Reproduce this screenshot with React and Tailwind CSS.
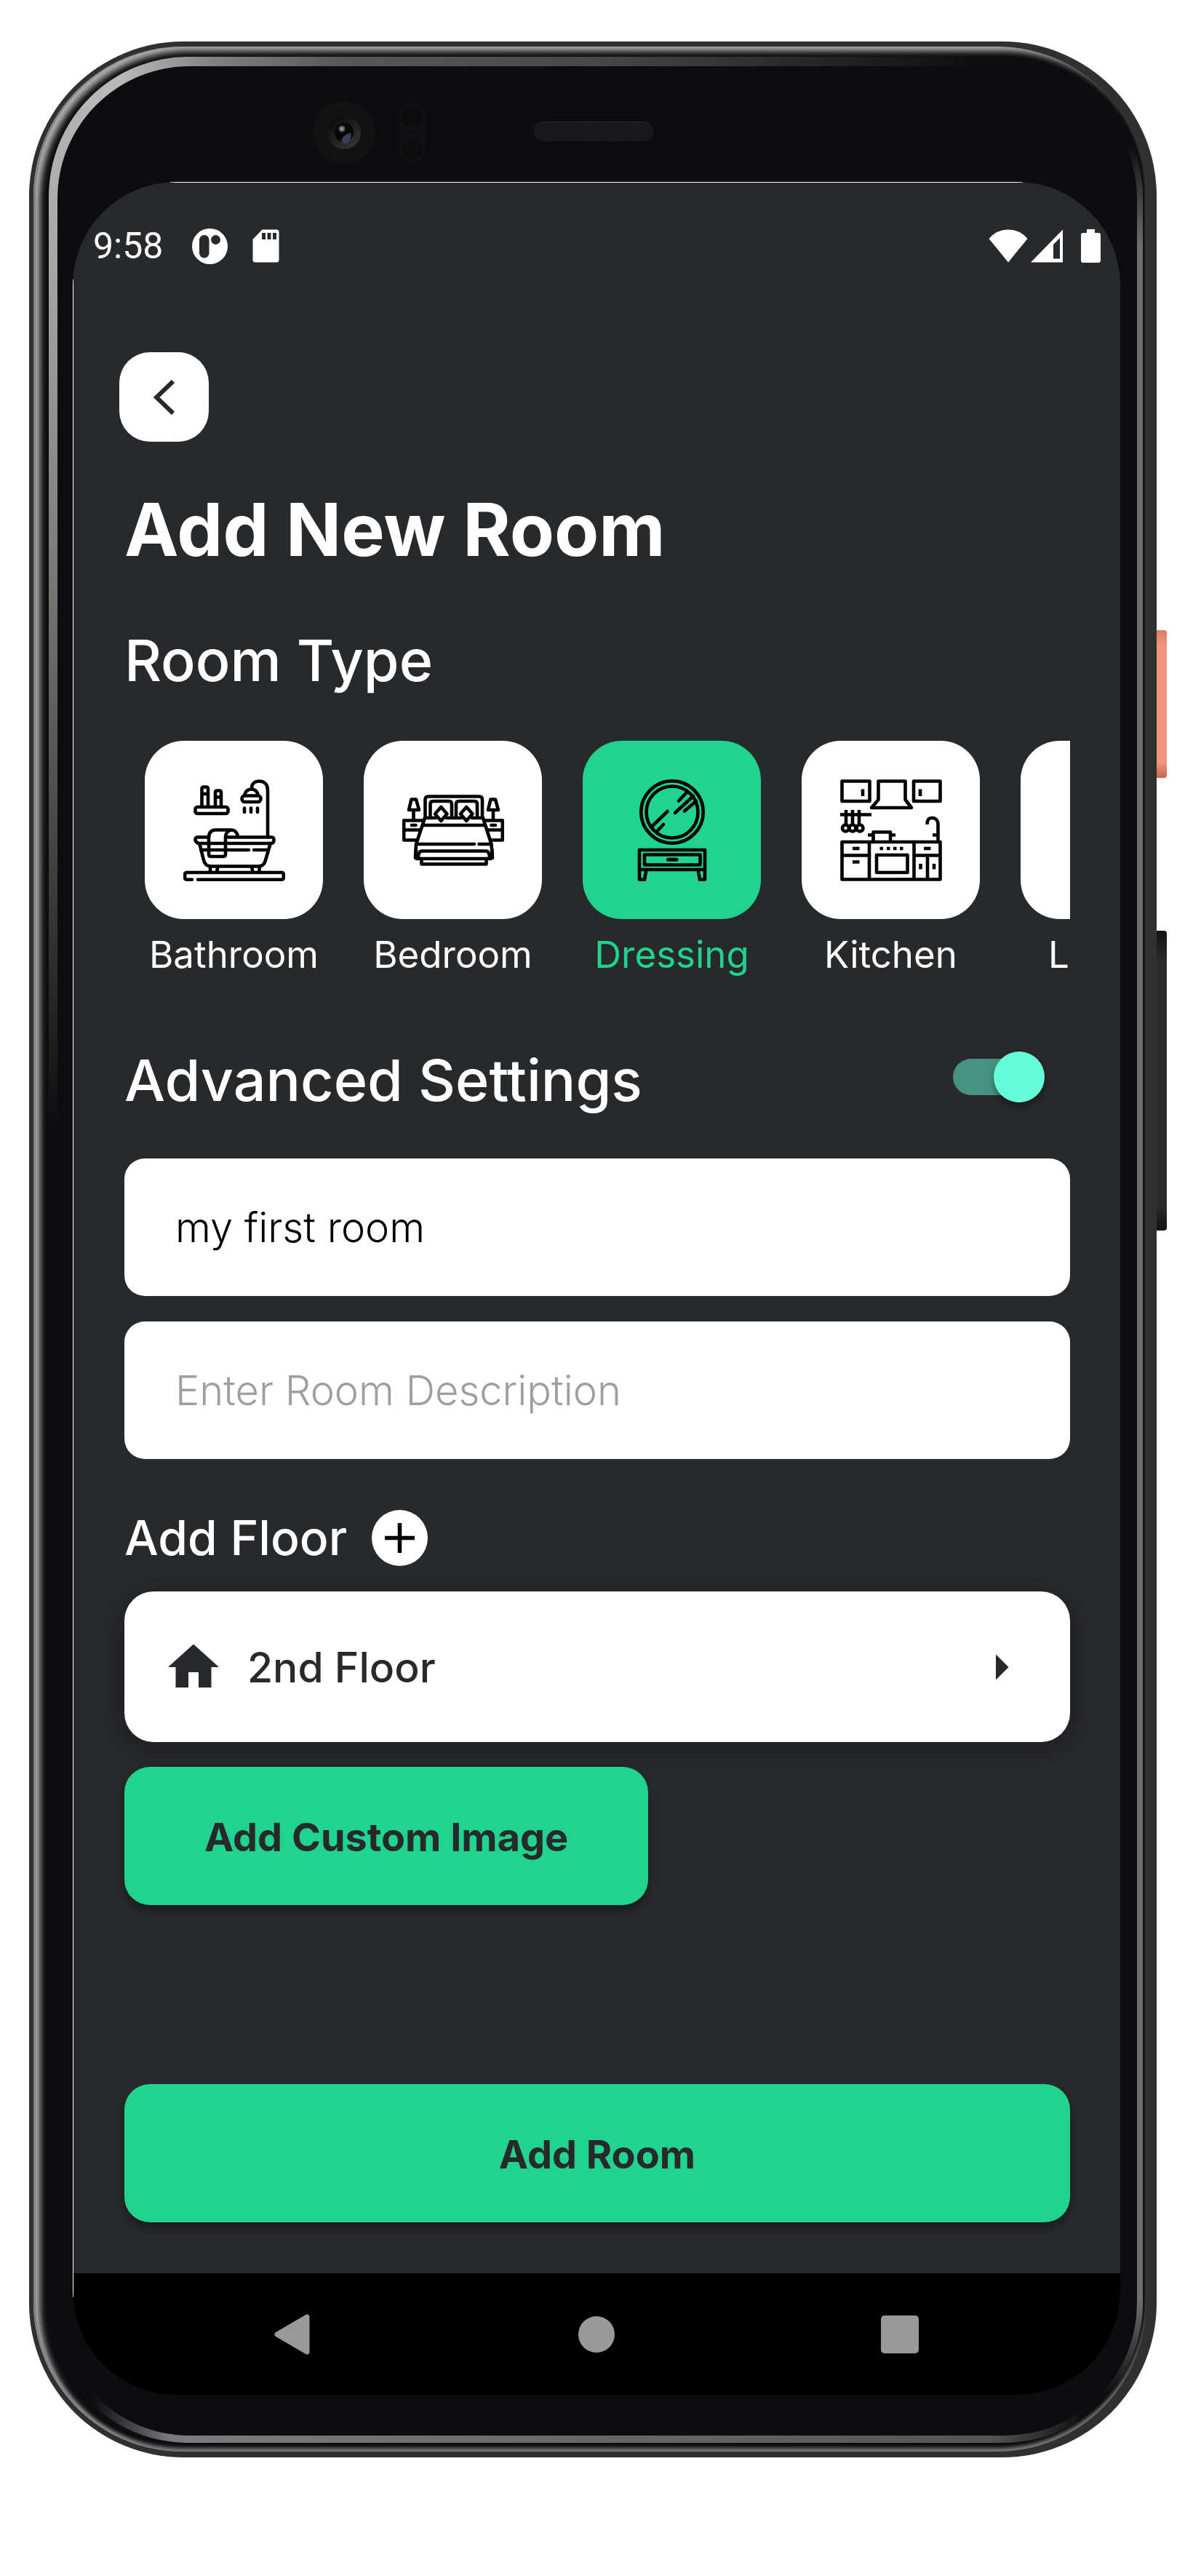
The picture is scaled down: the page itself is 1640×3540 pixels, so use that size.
import { useState } from "react";

/* ---------- status bar glyphs ---------- */

function AppBadgeIcon() {
  return (
    <svg viewBox="0 0 49 49" className="size-[49px]" aria-hidden="true">
      <circle cx="24.5" cy="24.5" r="24.5" fill="#fff" />
      <rect x="10" y="9" width="13.5" height="31.5" rx="6.5" fill="#28292b" />
      <circle cx="32.5" cy="15.5" r="6.5" fill="#28292b" />
    </svg>
  );
}

function SdCardIcon() {
  return (
    <svg viewBox="0 0 37 46" className="h-[46px] w-[37px]" aria-hidden="true">
      <path d="M13.500 0.500H33Q36.500 0.500 36.500 4V42Q36.500 45.500 33 45.500H4Q0.500 45.500 0.500 42V14Z" fill="#fff" />
      <path d="M13 5h5v9h-5zM20.500 5h5v9h-5zM28 5h5v9h-5z" fill="#28292b" />
    </svg>
  );
}

function WifiIcon() {
  return (
    <svg viewBox="0 0 54 46" className="h-[46px] w-[54px]" aria-hidden="true">
      <path d="M27 45.500L0.500 13Q11 0.500 27 0.500T53.500 13Z" fill="#fff" />
    </svg>
  );
}

function SignalIcon() {
  return (
    <svg viewBox="0 0 44 46" className="h-[46px] w-[44px]" aria-hidden="true">
      <path fillRule="evenodd" d="M44 0.500V45.500H0ZM40 12L31 21V40.500H40Z" fill="#fff" />
    </svg>
  );
}

function BatteryIcon() {
  return (
    <svg viewBox="0 0 27 46" className="h-[46px] w-[27px]" aria-hidden="true">
      <path d="M8 0H19V5H24Q27 5 27 8V43Q27 46 24 46H3Q0 46 0 43V8Q0 5 3 5H8Z" fill="#fff" />
    </svg>
  );
}

/* ---------- room glyphs ---------- */

function LineIcon({ children }) {
  return (
    <svg
      viewBox="0 0 140 140"
      className="size-[140px]"
      fill="none"
      stroke="#000"
      strokeWidth="4.600"
      strokeLinecap="round"
      strokeLinejoin="round"
      aria-hidden="true"
    >
      {children}
    </svg>
  );
}

function BathroomIcon() {
  return (
    <LineIcon>
      <rect x="16.500" y="38" width="45" height="9" rx="3" />
      <path d="M25.500 38V13Q25.500 10.500 28 10.500H31.500Q34 10.500 34 13V38M25.500 20H34" />
      <path d="M44 38V18Q44 15.500 46.500 15.500H49.500Q52 15.500 52 18V38M44 24.500H52" />
      <path d="M94 12C94 6 98 2.500 104.500 2.500C112 2.500 116 8 116 15V78" />
      <path d="M84 22Q86 13.500 93.500 13.500T103 22" />
      <rect x="80.500" y="22.500" width="26" height="8.500" rx="4" />
      <path d="M84 39.500V45M93 39.500V45M102 39.500V45" />
      <path d="M35 79.500H20Q16.500 79.500 16.500 83T21 88H120Q124.500 88 124.500 83.500T121 79.500H58" />
      <path d="M35 88V80Q35 69.500 45 69.500H66Q74 70 75 79M58 88V80Q58 71 66 69.500M35 80V103Q35 106 38 106H55Q58 106 58 103V80" />
      <path d="M22.500 89L28 111Q30 119.500 38 119.500H103Q111 119.500 113 111L119.500 89" />
      <path d="M24 97H90M97 97H117" />
      <path d="M37 120V127M47.500 120L46 127M94 120L95.500 127M104.500 120V127" />
      <path d="M12 137.700H5Q2.200 137.700 2.200 135V131Q2.200 128 5 128H135Q137.800 128 137.800 131V135Q137.800 137.700 135 137.700H20" />
    </LineIcon>
  );
}

function BedroomIcon() {
  return (
    <LineIcon>
      <path d="M31.500 53V28Q31.500 23.500 36 23.500H106Q110 23.500 110 28V53" />
      <path d="M38.500 52V34Q38.500 30 42.500 30H64Q68 30 68 34V52M74 52V34Q74 30 78 30H99Q103 30 103 34V52" />
      <path d="M31 53H46M61 53H81M96 53H111" />
      <path d="M53.300 38L61.500 47.500L53.300 57L45 47.500ZM88.200 38L96.500 47.500L88.200 57L80 47.500Z" />
      <path d="M29 63H113M20 89H99M105.500 89H122" />
      <path d="M31 53L19 89L18 108M111 53L122.500 89L124 108" />
      <path d="M27 98.500H115Q118 98.500 119 102L122 109H20L23 102Q24 98.500 27 98.500Z" />
      <path d="M26.500 109V116.500H115.500V109" />
      <path d="M19 97V108H23M123.500 97V108H119" />
      <path d="M12.500 27.500H19L23 42H9ZM15.500 42V55M121.500 27.500H128L132 42H118ZM125 42V55" />
      <path d="M28 56.500H2.200V83.500H20M2.200 69.500H23M13 63H18.500M113 56.500H137.800V83.500H122M118 69.500H137.800M122.500 63H128" />
    </LineIcon>
  );
}

function DressingIcon() {
  return (
    <LineIcon>
      <circle cx="70" cy="45" r="42.700" />
      <circle cx="70" cy="45" r="35.500" />
      <path d="M91 17L79 29.500M99 23L74 46M103 30L87 43.500M63.500 44L41 66M58 62L49 71.500" />
      <rect x="25" y="97" width="90" height="27" />
      <rect x="32" y="103.500" width="76.500" height="14" />
      <path d="M64.500 110.300H76" strokeWidth="5" />
      <path d="M25 124V137.800H32L34.500 124M115 124V137.800H108L105.500 124" />
    </LineIcon>
  );
}

function KitchenIcon() {
  return (
    <LineIcon>
      <g strokeLinecap="butt">
        <rect x="2.500" y="2.500" width="38" height="27.500" />
        <rect x="101" y="2.500" width="36.500" height="27.500" />
        <path d="M31 13.500V23M110 13.500V23" />
        <path d="M52.500 2.500H89.500V28L98 39H43L52.500 28Z" />
        <path d="M0 48.500H43M8 42V62M17 42V62M26 42V62" />
        <circle cx="7.500" cy="67" r="4.500" />
        <circle cx="17" cy="67" r="4.500" />
        <circle cx="27" cy="67" r="4.500" />
        <path d="M45.500 85V72.500H69V85M38 76.500H45M69 76.500H76" />
        <path d="M119.500 62C119.500 55 122 53 126.500 53S134.500 56 134.500 62V85M127 76.500H134" />
        <path d="M2.500 86H137.500V137.500H2.500ZM40 86V137M101.500 86V137M2.500 104.500H40M101.500 104.500H137M120 104.500V137" />
        <path d="M17 95H26.500M17 113.500H26.500M115 95H124.500M110.500 116V123.500M129 116V123.500" />
        <path d="M54.500 95H59M64 95H68.500M73 95H77.500M82 95H86.500" />
        <rect x="50" y="104" width="42.500" height="24" />
      </g>
    </LineIcon>
  );
}

/* ---------- device hardware ---------- */

function SensorBar() {
  return (
    <div className="flex items-center pt-12 pb-[25px] pl-[330px]" aria-hidden="true">
      <svg viewBox="0 0 86 86" className="size-[86px]">
        <defs>
          <linearGradient id="lensRim" x1="0.200" y1="0.100" x2="0.800" y2="0.900">
            <stop offset="0" stopColor="#0c0c0d" />
            <stop offset="1" stopColor="#333335" />
          </linearGradient>
          <radialGradient id="lensGlint">
            <stop offset="0.300" stopColor="#8f8f8f" />
            <stop offset="1" stopColor="#8f8f8f" stopOpacity="0" />
          </radialGradient>
          <clipPath id="lensHole">
            <circle cx="43" cy="43" r="13" />
          </clipPath>
        </defs>
        <circle cx="43" cy="43" r="43" fill="#121212" />
        <circle cx="43" cy="43" r="23" fill="url(#lensRim)" />
        <circle cx="43" cy="43" r="13" fill="#070708" />
        <ellipse cx="49" cy="51" rx="10" ry="6" transform="rotate(-30 49 51)" fill="#3a3f5c" clipPath="url(#lensHole)" />
        <circle cx="40" cy="38" r="5.500" fill="url(#lensGlint)" />
      </svg>
      <div className="ml-8 flex h-[82px] w-[37px] flex-col items-center justify-between rounded-full bg-[#111113] p-1">
        <div className="size-[29px] rounded-full bg-[#0d0d0e]" />
        <div className="size-[29px] rounded-full bg-[#0d0d0e]" />
      </div>
      <div className="mb-1 ml-[149px] h-[27px] w-[164px] rounded-full border-t border-[#2a2a2c] bg-[#17171a] bg-[repeating-conic-gradient(#222225_0_25%,#0f0f11_0_50%)] bg-size-[4px_4px]" />
    </div>
  );
}

function StatusBar() {
  return (
    <div className="flex h-14 items-center pr-[27px] pl-[28px]">
      <time className="font-[Roboto,sans-serif] text-[50px] leading-[56px] text-white">9:58</time>
      <div className="ml-10 flex items-center gap-[34px]">
        <AppBadgeIcon />
        <SdCardIcon />
      </div>
      <div className="ml-auto flex items-center">
        <WifiIcon />
        <span className="ml-1 flex">
          <SignalIcon />
        </span>
        <span className="ml-[25px] flex">
          <BatteryIcon />
        </span>
      </div>
    </div>
  );
}

function NavigationBar() {
  return (
    <nav className="flex h-[167px] items-center justify-between bg-black px-[277px]" aria-label="System">
      <button type="button" aria-label="Back" className="w-[52px]">
        <svg viewBox="0 0 49 56" className="h-14 w-[49px]">
          <path d="M4 28L45 4V52Z" fill="#999" stroke="#999" strokeWidth="7" strokeLinejoin="round" />
        </svg>
      </button>
      <button type="button" aria-label="Home" className="size-[50px] rounded-full bg-[#999]" />
      <button type="button" aria-label="Recent apps" className="size-[52px] rounded-[5px] bg-[#999]" />
    </nav>
  );
}

/* ---------- screen content ---------- */

const ROOMS = [
  { name: "Bathroom", Icon: BathroomIcon },
  { name: "Bedroom", Icon: BedroomIcon },
  { name: "Dressing", Icon: DressingIcon },
  { name: "Kitchen", Icon: KitchenIcon },
  { name: "Library", Icon: null },
];

function RoomTile({ name, Icon, selected, onSelect }) {
  return (
    <button
      type="button"
      aria-pressed={selected}
      onClick={onSelect}
      className="flex w-[245px] shrink-0 flex-col items-center gap-[19px]"
    >
      <span
        className={
          selected
            ? "flex size-[245px] items-center justify-center rounded-[54px] bg-[#20d38f]"
            : "flex size-[245px] items-center justify-center rounded-[54px] bg-white"
        }
      >
        {Icon && <Icon />}
      </span>
      <span
        className={
          selected
            ? "text-[51px] leading-[60px] text-[#20d38f]"
            : "text-[51px] leading-[60px] text-white"
        }
      >
        {name}
      </span>
    </button>
  );
}

const FIELD =
  "block h-[189px] w-full rounded-[28px] bg-white px-[70px] text-[56px] font-light text-black outline-none placeholder:text-[#9e9e9e]";

const PRIMARY =
  "h-[190px] rounded-[35px] bg-[#20d38f] pt-[3px] text-[54px] font-bold text-[#28292b] shadow-[0_7px_12px_rgba(0,0,0,0.35)]";

function AddRoomForm() {
  const [room, setRoom] = useState("Dressing");
  const [advanced, setAdvanced] = useState(true);
  const [name, setName] = useState("my first room");
  const [description, setDescription] = useState("");

  return (
    <form className="pt-[61px] pr-[69px] pb-[70px] pl-[71px]" onSubmit={(e) => e.preventDefault()}>
      <h1 className="text-[100px] leading-[120px] font-bold text-white">Add New Room</h1>

      <h2 className="mt-[71px] text-[79px] leading-[96px] font-medium text-white">Room Type</h2>
      <div className="mt-[63px] flex gap-14 overflow-hidden pl-7">
        {ROOMS.map((r) => (
          <RoomTile
            key={r.name}
            name={r.name}
            Icon={r.Icon}
            selected={room === r.name}
            onSelect={() => setRoom(r.name)}
          />
        ))}
      </div>

      <div className="mt-[94px] flex items-center justify-between pr-[49px]">
        <label htmlFor="advanced" className="text-[79px] leading-[96px] font-medium text-white">
          Advanced Settings
        </label>
        <div className="flex pb-2">
          <input
            id="advanced"
            type="checkbox"
            role="switch"
            checked={advanced}
            onChange={(e) => setAdvanced(e.target.checked)}
            className="relative h-[50px] w-[112px] appearance-none rounded-full bg-[#469480] before:absolute before:-top-[10px] before:-right-[14px] before:size-[70px] before:rounded-full before:bg-[#64ffda] before:shadow-[0_5px_8px_rgba(0,0,0,0.4)]"
          />
        </div>
      </div>

      <div className="mt-[60px] flex flex-col gap-[35px]">
        <input
          type="text"
          aria-label="Room name"
          value={name}
          onChange={(e) => setName(e.target.value)}
          className={FIELD}
        />
        <input
          type="text"
          aria-label="Room description"
          placeholder="Enter Room Description"
          value={description}
          onChange={(e) => setDescription(e.target.value)}
          className={FIELD}
        />
      </div>

      <div className="mt-[70px] flex items-center gap-[34px]">
        <h3 className="text-[66px] leading-[77px] font-medium text-white">Add Floor</h3>
        <button
          type="button"
          aria-label="Add floor"
          className="flex size-[77px] items-center justify-center rounded-full bg-white"
        >
          <svg viewBox="0 0 41 41" className="size-[41px]" stroke="#000" strokeWidth="5.500">
            <path d="M20.500 0V41M0 20.500H41" />
          </svg>
        </button>
      </div>

      <button
        type="button"
        className="mt-[35px] flex h-[207px] w-full items-center rounded-[40px] bg-white px-[53px] text-[#28292b] shadow-[0_8px_40px_rgba(0,0,0,0.3)]"
      >
        <svg viewBox="0 0 24 24" className="size-[84px]" fill="currentColor" aria-hidden="true">
          <path d="M10 20v-6h4v6h5v-8h3L12 3 2 12h3v8z" />
        </svg>
        <span className="pt-[3px] pl-8 text-[57px] leading-[70px] font-medium">2nd Floor</span>
        <svg viewBox="0 0 24 24" className="ml-auto size-[84px]" fill="currentColor" aria-hidden="true">
          <path d="M10 17l5-5-5-5z" />
        </svg>
      </button>

      <div className="mt-[34px] flex">
        <button type="button" className={PRIMARY + " px-[110px]"}>
          Add Custom Image
        </button>
      </div>

      <button type="submit" className={PRIMARY + " mt-[246px] w-full"}>
        Add Room
      </button>
    </form>
  );
}

function Screen() {
  return (
    <main className="relative overflow-hidden rounded-[142px] bg-[#28292b] pt-[60px] font-[Inter,sans-serif] before:absolute before:inset-x-[134px] before:top-0 before:h-px before:bg-white after:absolute after:inset-y-[134px] after:left-0 after:w-px after:bg-white">
      <StatusBar />
      <header className="px-16 pt-[118px]">
        <button
          type="button"
          aria-label="Go back"
          className="flex size-[123px] items-center justify-center rounded-[42px] bg-white"
        >
          <svg viewBox="0 0 30 48" className="h-12 w-[30px]" fill="none" stroke="#28292b" strokeWidth="6">
            <path d="M27 2L4 24L27 46" />
          </svg>
        </button>
      </header>
      <AddRoomForm />
      <NavigationBar />
    </main>
  );
}

const EDGE_LIGHT =
  "bg-[linear-gradient(180deg,#0d0d0f_120px,#6e6e70_260px,#6e6e70_94%,#0d0d0f_98%),linear-gradient(90deg,#0d0d0f_60px,#7c7c7e_170px,#555_86%,#0d0d0f_95%),linear-gradient(90deg,#b8b8b8_100px,#808080_230px,#585858_400px,#484848_50%,#0d0d0f_85%),linear-gradient(180deg,#b8b8b8_0%,#a8a8a8_8%,#808080_20%,#0d0d0f_45%)] bg-size-[90px_100%,100%_80px,100%_70px,100%_100%] bg-position-[right_top,left_bottom,left_top,left_top] bg-no-repeat";

export default function App() {
  return (
    <div className="flex min-h-screen items-start bg-white pt-[57px] pr-9 pl-10">
      <div className="min-w-0 flex-1 rounded-[212px] bg-[#303030] pt-[7px] pr-[14px] pb-2 pl-[6px]">
        <div className="rounded-[205px] bg-[#0d0d0f] pt-[14px] pr-[5px] pb-3 pl-[21px] shadow-[inset_3px_0_1px_#808080,inset_9px_6px_8px_#b0b0b0,inset_0_-5px_5px_#777]">
          <div className={"rounded-[192px] pt-[13px] pr-2 pb-[10px] pl-3 " + EDGE_LIGHT}>
            <div className="rounded-[182px] bg-[#0d0d0f] pr-[23px] pb-14 pl-[21px]">
              <SensorBar />
              <Screen />
            </div>
          </div>
        </div>
      </div>
      <div className="flex w-[14px] shrink-0 flex-col gap-[210px] pt-[809px]" aria-hidden="true">
        <div className="h-[203px] rounded-r-[4px] bg-[linear-gradient(180deg,#dd7a62,#f0947c_10%,#f0947c_90%,#c9634c)]" />
        <div className="h-[412px] rounded-r-[4px] bg-[linear-gradient(180deg,#131314,#2b2b2b_10%,#2b2b2b_92%,#131314)]" />
      </div>
    </div>
  );
}
